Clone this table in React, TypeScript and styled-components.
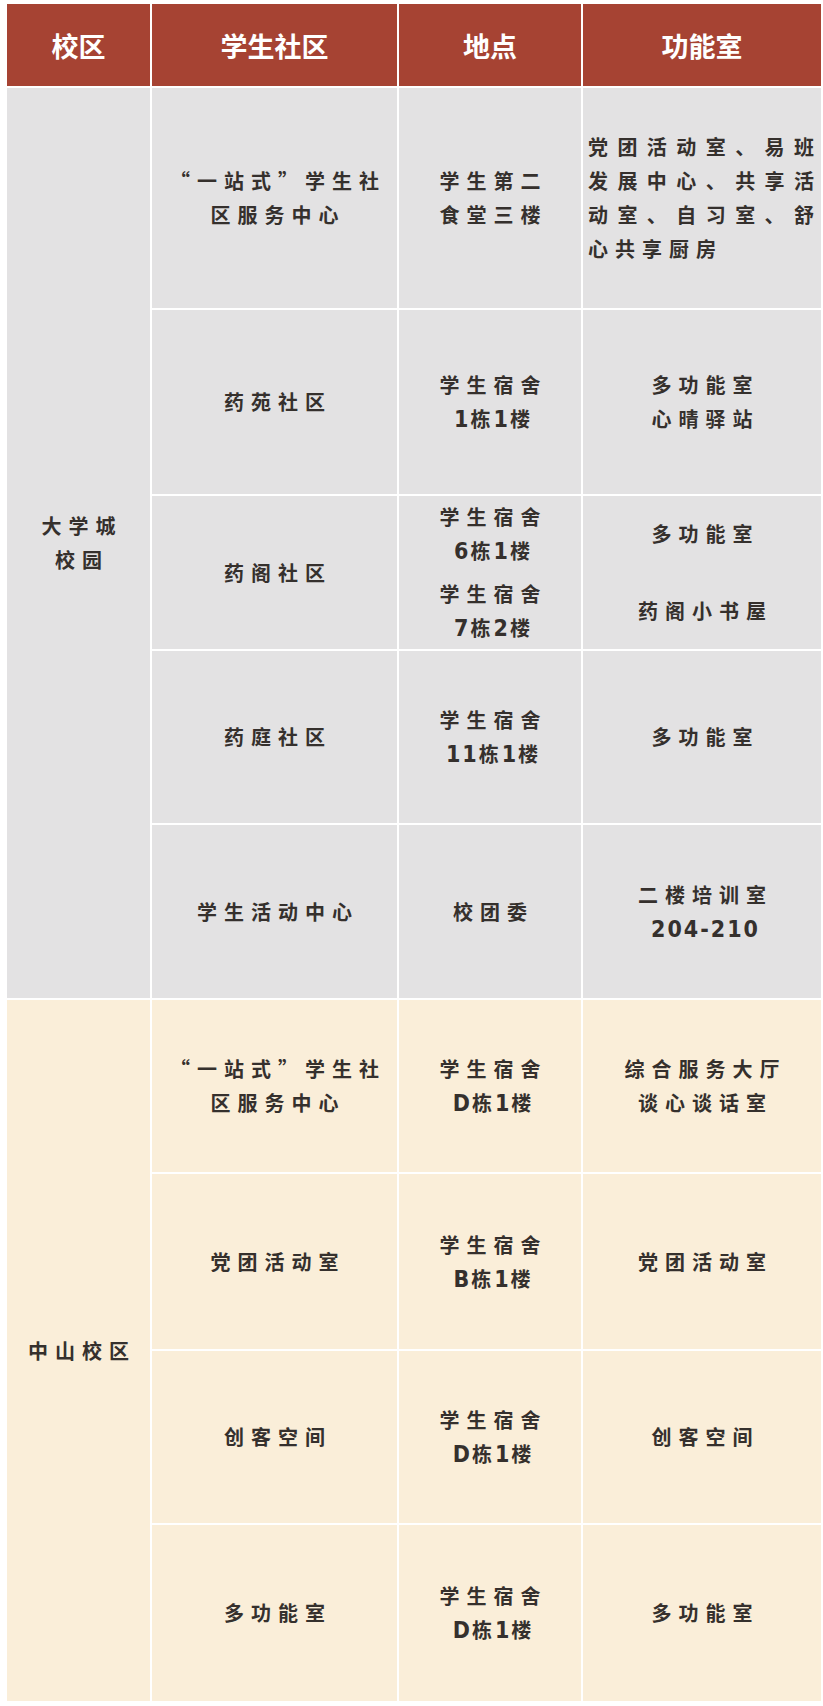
import React from 'react';
import styled, { createGlobalStyle } from 'styled-components';

const headRed = '#a64333';
const campusGray = '#e3e2e3';
const campusBeige = '#faeed9';
const inkColor = '#35302d';

const GlobalStyle = createGlobalStyle`
  html, body {
    margin: 0;
    padding: 0;
    background: #ffffff;
  }
  body {
    font-family: "Noto Sans CJK SC", "Noto Sans", sans-serif;
  }
`;

const Table = styled.div`
  display: grid;
  grid-template-columns: 143px 245px 182px 238px;
  grid-template-rows: 82px 220px 184px 153px 172px 173px 172px 175px 172px 176px;
  gap: 2px;
  width: 814px;
  margin: 4px 0 0 7px;
  background: #ffffff;
`;

const HeadCell = styled.div`
  display: flex;
  align-items: center;
  justify-content: center;
  background: ${headRed};
  color: #ffffff;
  font-family: "Noto Sans CJK SC", sans-serif;
  font-size: 27px;
  font-weight: 700;
  letter-spacing: 0;
`;

type Tone = 'gray' | 'beige';

const Cell = styled.div<{ $tone: Tone; $span?: number }>`
  display: flex;
  flex-direction: column;
  align-items: center;
  justify-content: center;
  grid-row: ${(p) => (p.$span ? `span ${p.$span}` : 'auto')};
  background: ${(p) => (p.$tone === 'gray' ? campusGray : campusBeige)};
  color: ${inkColor};
  font-family: "Noto Sans CJK SC", sans-serif;
  font-size: 20px;
  font-weight: 700;
  line-height: 34px;
  letter-spacing: 7px;
  text-align: center;
  padding-left: 7px;
`;

// lines holding numbers ("6栋1楼", "204-210") are set much tighter in the sheet
const Line = styled.div<{ $tight?: boolean }>`
  white-space: nowrap;
  letter-spacing: ${(p) => (p.$tight ? '3px' : 'inherit')};
`;

const Num = styled.span`
  font-family: "Liberation Sans Narrow", "DejaVu Sans Condensed", "Liberation Sans", sans-serif;
  font-size: 23px;
  font-weight: 700;
  letter-spacing: 2px;
`;

// the long list in the first row is justified edge to edge, last line flush left
const ListCell = styled(Cell)`
  align-items: stretch;
  padding-left: 5px;
  text-align: left;
`;

const JustLine = styled.div<{ $fill: boolean }>`
  white-space: nowrap;
  text-align: ${(p) => (p.$fill ? 'justify' : 'left')};
  text-align-last: ${(p) => (p.$fill ? 'justify' : 'left')};
`;

const Stack = styled.div`
  display: flex;
  flex-direction: column;
  gap: 9px;
`;

const StackItem = styled.div`
  display: flex;
  flex-direction: column;
  align-items: center;
  justify-content: center;
  min-height: 68px;
`;

type Row = {
  community: string[];
  place: string[][];
  rooms: string[][];
};

const daxuecheng: Row[] = [
  {
    community: ['“一站式”学生社', '区服务中心'],
    place: [['学生第二', '食堂三楼']],
    rooms: [],
  },
  { community: ['药苑社区'], place: [['学生宿舍', '1栋1楼']], rooms: [['多功能室', '心晴驿站']] },
  {
    community: ['药阁社区'],
    place: [
      ['学生宿舍', '6栋1楼'],
      ['学生宿舍', '7栋2楼'],
    ],
    rooms: [['多功能室'], ['药阁小书屋']],
  },
  { community: ['药庭社区'], place: [['学生宿舍', '11栋1楼']], rooms: [['多功能室']] },
  { community: ['学生活动中心'], place: [['校团委']], rooms: [['二楼培训室', '204-210']] },
];

const zhongshan: Row[] = [
  {
    community: ['“一站式”学生社', '区服务中心'],
    place: [['学生宿舍', 'D栋1楼']],
    rooms: [['综合服务大厅', '谈心谈话室']],
  },
  { community: ['党团活动室'], place: [['学生宿舍', 'B栋1楼']], rooms: [['党团活动室']] },
  { community: ['创客空间'], place: [['学生宿舍', 'D栋1楼']], rooms: [['创客空间']] },
  { community: ['多功能室'], place: [['学生宿舍', 'D栋1楼']], rooms: [['多功能室']] },
];

const firstRoomList = ['党团活动室、易班', '发展中心、共享活', '动室、自习室、舒', '心共享厨房'];

const latinRun = /^[A-Za-z0-9\-]+$/;

// split a line so runs of latin letters / digits get the narrow face
function MixedText({ text }: { text: string }) {
  const parts = text.split(/([A-Za-z0-9\-]+)/).filter(Boolean);
  return (
    <>
      {parts.map((p, i) => (latinRun.test(p) ? <Num key={i}>{p}</Num> : <span key={i}>{p}</span>))}
    </>
  );
}

function Lines({ lines }: { lines: string[] }) {
  return (
    <>
      {lines.map((l) => (
        <Line key={l} $tight={/[A-Za-z0-9]/.test(l)}>
          <MixedText text={l} />
        </Line>
      ))}
    </>
  );
}

function Blocks({ blocks }: { blocks: string[][] }) {
  if (blocks.length === 1) return <Lines lines={blocks[0]} />;
  return (
    <Stack>
      {blocks.map((b, i) => (
        <StackItem key={i}>
          <Lines lines={b} />
        </StackItem>
      ))}
    </Stack>
  );
}

function CampusRows({ rows, tone }: { rows: Row[]; tone: Tone }) {
  return (
    <>
      {rows.map((r, i) => (
        <React.Fragment key={i}>
          <Cell $tone={tone}>
            <Lines lines={r.community} />
          </Cell>
          <Cell $tone={tone}>
            <Blocks blocks={r.place} />
          </Cell>
          {r.rooms.length === 0 ? (
            <ListCell $tone={tone}>
              {firstRoomList.map((l, j) => (
                <JustLine key={l} $fill={j < firstRoomList.length - 1}>
                  {l}
                </JustLine>
              ))}
            </ListCell>
          ) : (
            <Cell $tone={tone}>
              <Blocks blocks={r.rooms} />
            </Cell>
          )}
        </React.Fragment>
      ))}
    </>
  );
}

const CampusCell = styled(Cell)<{ $from: number }>`
  grid-column: 1;
  grid-row: ${(p) => `${p.$from} / span ${p.$span}`};
`;

export default function App() {
  return (
    <>
      <GlobalStyle />
      <Table>
        <HeadCell>校区</HeadCell>
        <HeadCell>学生社区</HeadCell>
        <HeadCell>地点</HeadCell>
        <HeadCell>功能室</HeadCell>

        <CampusCell $tone='gray' $from={2} $span={5}>
          <Line>大学城</Line>
          <Line>校园</Line>
        </CampusCell>
        <CampusRows rows={daxuecheng} tone='gray' />

        <CampusCell $tone='beige' $from={7} $span={4}>
          <Line>中山校区</Line>
        </CampusCell>
        <CampusRows rows={zhongshan} tone='beige' />
      </Table>
    </>
  );
}
